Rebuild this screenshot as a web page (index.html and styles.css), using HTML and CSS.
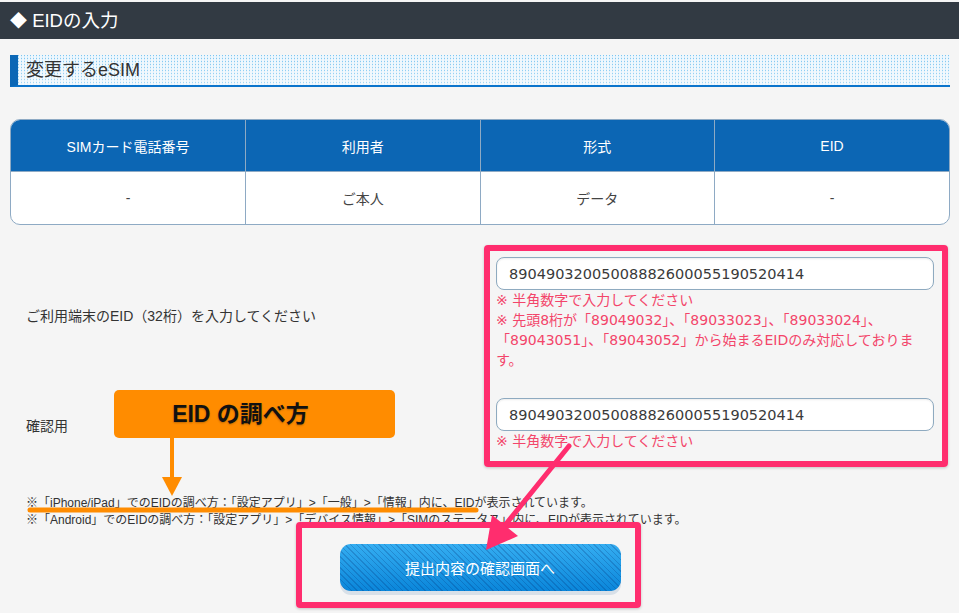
FILE: index.html
```html
<!DOCTYPE html>
<html lang="ja">
<head>
<meta charset="utf-8">
<title>EIDの入力</title>
<link rel="stylesheet" href="styles.css">
</head>
<body>
<header class="page-header"><span class="diamond">◆</span> EIDの入力</header>
<main class="content">
  <h2 class="section-title">変更するeSIM</h2>
  <div class="table-wrap">
    <table class="esim-table">
      <thead>
        <tr><th>SIMカード電話番号</th><th>利用者</th><th>形式</th><th>EID</th></tr>
      </thead>
      <tbody>
        <tr><td>-</td><td>ご本人</td><td>データ</td><td>-</td></tr>
      </tbody>
    </table>
  </div>

  <div class="form">
    <div class="form-row row-first">
      <div class="form-label">ご利用端末のEID（32桁）を入力してください</div>
      <div class="form-field">
        <input class="eid-input" type="text" value="89049032005008882600055190520414">
        <p class="err">※ 半角数字で入力してください</p>
        <p class="err">※ 先頭8桁が「89049032」、「89033023」、「89033024」、「89043051」、「89043052」から始まるEIDのみ対応しております。</p>
      </div>
    </div>
    <div class="form-row row-second">
      <div class="form-label">確認用</div>
      <div class="form-field">
        <input class="eid-input" type="text" value="89049032005008882600055190520414">
        <p class="err">※ 半角数字で入力してください</p>
      </div>
    </div>
  </div>

  <div class="notes">
    <p>※「iPhone/iPad」でのEIDの調べ方：「設定アプリ」&gt;「一般」&gt;「情報」内に、EIDが表示されています。</p>
    <p>※「Android」でのEIDの調べ方：「設定アプリ」&gt;「デバイス情報」&gt;「SIMのステータス」内に、EIDが表示されています。</p>
  </div>

  <div class="btn-wrap">
    <button class="submit-btn" type="button">提出内容の確認画面へ</button>
  </div>
</main>

<div class="anno-box anno-box-input"></div>
<div class="anno-box anno-box-btn"></div>
<div class="anno-label">EID の調べ方</div>
<svg class="anno-svg" width="959" height="613" viewBox="0 0 959 613">
  <line x1="172" y1="438" x2="172" y2="480" stroke="#ff8c00" stroke-width="4"/>
  <polygon points="162,477 182,477 172,496" fill="#ff8c00"/>
  <line x1="30" y1="510" x2="476" y2="510" stroke="#ff8c00" stroke-width="5" stroke-linecap="round"/>
  <line x1="569" y1="446" x2="502" y2="529" stroke="#ff2d6e" stroke-width="5" stroke-linecap="round"/>
  <polygon points="486,550 492,515 518,536" fill="#ff2d6e"/>
</svg>
</body>
</html>
```

FILE: styles.css
```css
html, body {
  margin: 0;
  padding: 0;
}
body {
  background: #f5f5f5;
  font-family: "Liberation Sans", "Noto Sans CJK JP", sans-serif;
  color: #333;
  position: relative;
  width: 959px;
  height: 613px;
  overflow: hidden;
}
.page-header {
  margin-top: 2px;
  height: 37px;
  background: #323a43;
  color: #fff;
  font-size: 18.5px;
  line-height: 37px;
  padding-left: 10px;
}
.diamond {
  font-size: 17px;
}
.content {
  padding: 0 9px 0 10px;
}
.section-title {
  margin: 16px 0 0;
  height: 30px;
  border-left: 8px solid #0b67b6;
  border-bottom: 2px solid #0b74cc;
  background-color: #ffffff;
  background-image:
    linear-gradient(rgba(255,255,255,0), rgba(255,255,255,0.3)),
    linear-gradient(90deg, transparent 0 1px, #eef7fd 1px),
    linear-gradient(180deg, #7cc6f1 0 1px, #d9eefb 1px);
  background-size: 100% 100%, 3px 3px, 3px 3px;
  font-size: 18px;
  font-weight: normal;
  line-height: 30px;
  padding-left: 8px;
  color: #333;
}
.table-wrap {
  margin-top: 32px;
  border: 1px solid #8eaac4;
  border-radius: 10px;
  overflow: hidden;
  background: #fff;
}
.esim-table {
  width: 100%;
  border-collapse: collapse;
  table-layout: fixed;
  font-size: 14px;
}
.esim-table th {
  background: #0c66b4;
  color: #fff;
  font-weight: normal;
  height: 51px;
  padding: 0;
  border-left: 1px solid #8eaac4;
  border-bottom: 1px solid #8eaac4;
}
.esim-table td {
  height: 52px;
  padding: 0;
  text-align: center;
  border-left: 1px solid #8eaac4;
  color: #444;
}
.esim-table th:first-child,
.esim-table td:first-child {
  border-left: none;
}
.form {
  margin-top: 20px;
}
.form-row {
  display: flex;
  align-items: center;
}
.form-label {
  width: 470px;
  box-sizing: border-box;
  padding-left: 16px;
  font-size: 14px;
  color: #333;
}
.form-field {
  flex: 1;
  padding: 12px 16px 14px;
}
.row-second .form-field {
  padding: 14px 16px 14px;
}
.eid-input {
  display: block;
  width: 100%;
  box-sizing: border-box;
  height: 33px;
  border: 1px solid #8eaac0;
  border-radius: 8px;
  background: #fff;
  padding: 0 12px;
  font-family: "DejaVu Sans", sans-serif;
  font-size: 14.5px;
  color: #3a3a3a;
  box-shadow: inset 0 1px 2px rgba(0,0,0,0.08);
}
.err {
  margin: 0;
  color: #f3456a;
  font-family: "DejaVu Sans", "Noto Sans CJK JP", sans-serif;
  font-size: 14px;
  line-height: 20px;
}
.notes {
  margin-top: 30px;
  padding-left: 16px;
  font-size: 12px;
  line-height: 17px;
  color: #333;
}
.notes p {
  margin: 0;
}
.btn-wrap {
  margin-top: 15px;
  display: flex;
  justify-content: center;
}
.submit-btn {
  width: 281px;
  height: 47px;
  border: none;
  border-radius: 11px;
  color: #fff;
  font-family: "Liberation Sans", "Noto Sans CJK JP", sans-serif;
  font-size: 15px;
  background-color: #1592e2;
  background-image:
    repeating-linear-gradient(45deg, rgba(0,40,110,0.22) 0 1px, transparent 1px 4px),
    linear-gradient(#35aef2, #0a86da);
  box-shadow: 0 4px 0 #d8e0e8;
}
.anno-box {
  position: absolute;
  border: 6px solid #ff2d6e;
  border-radius: 4px;
  box-sizing: border-box;
  box-shadow: 0 1px 3px rgba(0,0,0,0.2);
}
.anno-box-input {
  left: 484px;
  top: 245px;
  width: 464px;
  height: 222px;
}
.anno-box-btn {
  left: 296px;
  top: 522px;
  width: 345px;
  height: 86px;
}
.anno-label {
  position: absolute;
  left: 114px;
  top: 390px;
  width: 281px;
  height: 48px;
  box-sizing: border-box;
  padding-right: 28px;
  background: #ff8c00;
  border-radius: 5px;
  color: #111;
  font-weight: bold;
  font-size: 23px;
  line-height: 48px;
  text-align: center;
  text-shadow: 0 1px 2px rgba(0,0,0,0.25);
  font-family: "Liberation Sans", "Noto Sans CJK JP", sans-serif;
}
.anno-svg {
  position: absolute;
  left: 0;
  top: 0;
}
```
